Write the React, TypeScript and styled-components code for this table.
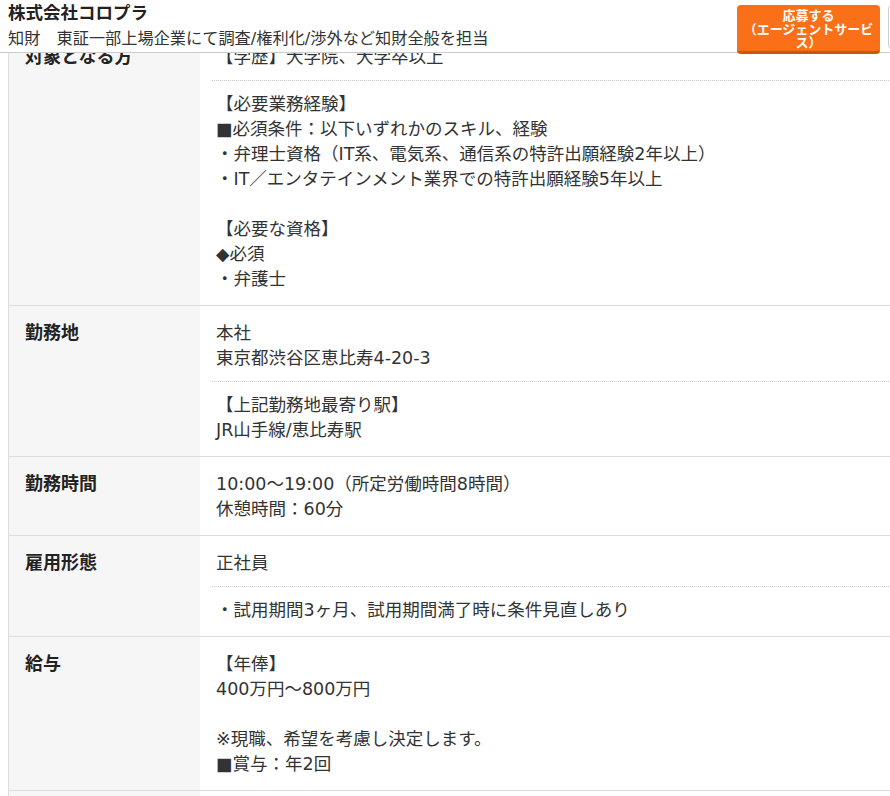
import React from "react";
import styled, { createGlobalStyle } from "styled-components";

const Global = createGlobalStyle`
  html, body {
    margin: 0;
    padding: 0;
    overflow: hidden;
    background: #fff;
  }
  body {
    font-family: "DejaVu Sans", "Noto Sans CJK JP", "Noto Sans", sans-serif;
    color: #333;
  }
`;

const Header = styled.header`
  position: fixed;
  top: 0;
  left: 0;
  width: 1010px;
  height: 52px;
  box-sizing: content-box;
  background: #fff;
  border-bottom: 1px solid #ccc;
  display: flex;
  align-items: flex-start;
  z-index: 10;
`;

const HeaderText = styled.div`
  flex: 1;
  padding-left: 8px;
  display: flex;
  flex-direction: column;
`;

const CompanyName = styled.div`
  font-size: 17.5px;
  font-weight: 700;
  line-height: 26px;
  color: #222;
`;

const Catch = styled.div`
  font-size: 16.2px;
  line-height: 25px;
  color: #333;
`;

const Actions = styled.div`
  display: flex;
  gap: 8px;
  margin-top: 5px;
  padding-right: 22px;
`;

const ApplyButton = styled.button`
  width: 143px;
  height: 49px;
  box-sizing: border-box;
  border: none;
  border-bottom: 3px solid #c9570f;
  border-radius: 4px;
  background: #f97019;
  color: #fff;
  font-family: "Noto Sans CJK JP", sans-serif;
  font-weight: 700;
  font-size: 13px;
  line-height: 13.5px;
  padding: 3px 4px 0;
  text-align: center;
  display: flex;
  flex-direction: column;
  align-items: center;
`;

const SubButton = styled.button`
  width: 100px;
  height: 44px;
  box-sizing: border-box;
  border: 1px solid #ccc;
  border-radius: 4px;
  background: #fff;
`;

const Main = styled.main`
  padding: 29px 0 0 8px;
`;

const Table = styled.div`
  width: 1000px;
  border-top: 1px solid #ddd;
  border-left: 1px solid #ddd;
`;

const Row = styled.div`
  display: grid;
  grid-template-columns: 191px 1fr;
  border-bottom: 1px solid #ddd;
`;

const Label = styled.div`
  background: #f6f6f6;
  padding: 13px 0 15px 16px;
  font-family: "Noto Sans CJK JP", sans-serif;
  font-size: 18px;
  font-weight: 700;
  line-height: 25px;
  color: #222;
`;

const Cell = styled.div`
  padding: 15px 0 13px 12px;
  font-size: 17.5px;
  line-height: 25px;
  color: #333;
`;

const Block = styled.div<{ $divided?: boolean }>`
  padding: 0 4px;
  ${(p) =>
    p.$divided
      ? `padding-bottom: 10px; margin-bottom: 11px; border-bottom: 1px dotted #c8c8c8;`
      : ""}
`;

const Line = styled.div`
  white-space: nowrap;
  min-height: 25px;
`;

type Item = { label: string; blocks: string[][] };

const items: Item[] = [
  {
    label: "対象となる方",
    blocks: [
      ["【学歴】大学院、大学卒以上"],
      [
        "【必要業務経験】",
        "■必須条件：以下いずれかのスキル、経験",
        "・弁理士資格（IT系、電気系、通信系の特許出願経験2年以上）",
        "・IT／エンタテインメント業界での特許出願経験5年以上",
        "",
        "【必要な資格】",
        "◆必須",
        "・弁護士",
      ],
    ],
  },
  {
    label: "勤務地",
    blocks: [
      ["本社", "東京都渋谷区恵比寿4-20-3"],
      ["【上記勤務地最寄り駅】", "JR山手線/恵比寿駅"],
    ],
  },
  {
    label: "勤務時間",
    blocks: [["10:00～19:00（所定労働時間8時間）", "休憩時間：60分"]],
  },
  {
    label: "雇用形態",
    blocks: [["正社員"], ["・試用期間3ヶ月、試用期間満了時に条件見直しあり"]],
  },
  {
    label: "給与",
    blocks: [
      [
        "【年俸】",
        "400万円～800万円",
        "",
        "※現職、希望を考慮し決定します。",
        "■賞与：年2回",
      ],
    ],
  },
  {
    label: "待遇・福利厚生",
    blocks: [["各種社会保険完備"]],
  },
];

export default function App() {
  return (
    <>
      <Global />
      <Header>
        <HeaderText>
          <CompanyName>株式会社コロプラ</CompanyName>
          <Catch>知財　東証一部上場企業にて調査/権利化/渉外など知財全般を担当</Catch>
        </HeaderText>
        <Actions>
          <ApplyButton>
            <span>応募する</span>
            <span>（エージェントサービス）</span>
          </ApplyButton>
          <SubButton />
        </Actions>
      </Header>
      <Main>
        <Table>
          {items.map((it) => (
            <Row key={it.label}>
              <Label>{it.label}</Label>
              <Cell>
                {it.blocks.map((b, i) => (
                  <Block key={i} $divided={i < it.blocks.length - 1}>
                    {b.map((l, j) => (
                      <Line key={j}>{l}</Line>
                    ))}
                  </Block>
                ))}
              </Cell>
            </Row>
          ))}
        </Table>
      </Main>
    </>
  );
}
